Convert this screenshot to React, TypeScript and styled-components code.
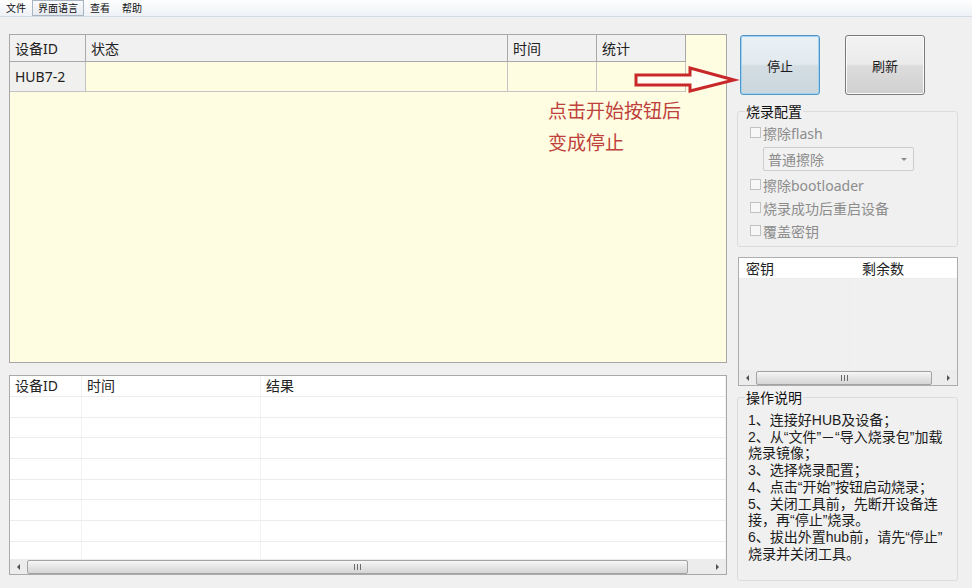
import React from "react";
import styled, { createGlobalStyle } from "styled-components";

const GlobalStyle = createGlobalStyle`
  html, body { margin: 0; padding: 0; background: #f0f0f0; }
  body { font-family: "Noto Sans", "Noto Sans CJK SC", sans-serif; color: #222; }
  * { box-sizing: border-box; }
`;

const Root = styled.div`
  position: relative;
  width: 972px;
  height: 588px;
  overflow: hidden;
  background: #f0f0f0;
  display: flex;
  flex-direction: column;
`;

const MenuBar = styled.div`
  height: 17px;
  display: flex;
  align-items: center;
  background: linear-gradient(#fefefe, #eef1f6);
  border-bottom: 1px solid #d3dbe6;
`;

const MenuItem = styled.div<{ $active?: boolean }>`
  font-size: 10px;
  line-height: 14px;
  height: 16px;
  padding: 0 5px;
  border: 1px solid ${(p) => (p.$active ? "#a9b4c2" : "transparent")};
  background: ${(p) => (p.$active ? "linear-gradient(#fafbfd,#e6eaf0)" : "transparent")};
  color: #111;
  display: flex;
  align-items: center;
`;

const Body = styled.div`
  display: flex;
  gap: 10px;
  padding: 17px 0 0 9px;
`;

const LeftCol = styled.div`
  width: 718px;
  display: flex;
  flex-direction: column;
  gap: 12px;
`;

const DeviceTable = styled.div`
  height: 329px;
  border: 1px solid #a7a7a7;
  background: #fefde2;
  display: grid;
  grid-template-columns: 76px 422px 89px 89px 1fr;
  grid-template-rows: 27px 30px;
  align-content: start;
`;

const HeadCell = styled.div`
  background: #f1f1f1;
  border-right: 1px solid #a9a9a9;
  border-bottom: 1px solid #a9a9a9;
  font-size: 14px;
  padding-left: 5px;
  display: flex;
  align-items: center;
  color: #222;
`;

const RowCell = styled.div<{ $gray?: boolean }>`
  background: ${(p) => (p.$gray ? "#f0f0ee" : "transparent")};
  border-right: 1px solid #c4c4c4;
  border-bottom: 1px solid #c4c4c4;
  font-size: 14px;
  padding-left: 5px;
  display: flex;
  align-items: center;
  color: #222;
`;

const Blank = styled.div``;

const LogTable = styled.div`
  height: 200px;
  border: 1px solid #a9a9a9;
  background: #fff;
  display: flex;
  flex-direction: column;
`;

const LogHead = styled.div`
  display: grid;
  grid-template-columns: 72px 179px 1fr;
  height: 21px;
  flex: none;
  border-bottom: 1px solid #ececec;
`;

const LogHeadCell = styled.div`
  font-size: 14px;
  padding-left: 5px;
  line-height: 20px;
  border-right: 1px solid #f1f1f1;
  color: #222;
`;

const LogBody = styled.div`
  flex: 1;
  overflow: hidden;
`;

const LogRow = styled.div`
  display: grid;
  grid-template-columns: 72px 179px 1fr;
  height: 20.7px;
  border-bottom: 1px solid #ececec;
`;

const LogCell = styled.div`
  border-right: 1px solid #f2f2f2;
`;

const Scroll = styled.div`
  height: 15px;
  flex: none;
  display: flex;
  align-items: center;
  background: #ececec;
`;

const ArrowBtn = styled.div<{ $dir: "l" | "r" }>`
  width: 17px;
  height: 15px;
  flex: none;
  display: flex;
  align-items: center;
  justify-content: center;
  &::before {
    content: "";
    width: 0;
    height: 0;
    border-top: 3px solid transparent;
    border-bottom: 3px solid transparent;
    ${(p) => (p.$dir === "l" ? "border-right: 3px solid #505050;" : "border-left: 3px solid #505050;")}
  }
`;

const Thumb = styled.div<{ $w: number }>`
  width: ${(p) => p.$w}px;
  height: 14px;
  flex: none;
  border: 1px solid #a3a3a3;
  border-radius: 2px;
  background: linear-gradient(#f6f6f6, #e4e4e4 50%, #d6d6d6);
  display: flex;
  align-items: center;
  justify-content: center;
`;

const Spacer = styled.div`
  flex: 1;
`;

const Grip = () => (
  <svg width="7" height="6" viewBox="0 0 7 6">
    <path d="M0.5 0v6M3.5 0v6M6.5 0v6" stroke="#6a6a6a" strokeWidth="1" />
  </svg>
);

const ScrollBar = ({ thumb }: { thumb: number }) => (
  <Scroll>
    <ArrowBtn $dir="l" />
    <Thumb $w={thumb}>
      <Grip />
    </Thumb>
    <Spacer />
    <ArrowBtn $dir="r" />
  </Scroll>
);

const RightCol = styled.div`
  width: 221px;
  display: flex;
  flex-direction: column;
`;

const ButtonRow = styled.div`
  display: flex;
  gap: 25px;
  padding-left: 3px;
  margin-top: 1px;
`;

const Button = styled.div<{ $focus?: boolean }>`
  width: 80px;
  height: 60px;
  border-radius: 3px;
  border: 1px solid ${(p) => (p.$focus ? "#4f98c8" : "#7a7a7a")};
  box-shadow: ${(p) => (p.$focus ? "inset 0 0 0 1px #9fd0ee" : "inset 0 0 0 1px #fbfbfb")};
  background: ${(p) =>
    p.$focus
      ? "linear-gradient(#eaf1f5, #e2eaef 48%, #d3dde3 52%, #cbd6dd)"
      : "linear-gradient(#f2f2f2, #ebebeb 48%, #dcdcdc 52%, #d0d0d0)"};
  display: flex;
  align-items: center;
  justify-content: center;
  font-size: 13px;
  color: #1a1a1a;
`;

const Group = styled.fieldset<{ $mt: number; $h?: number }>`
  margin: ${(p) => p.$mt}px 0 0 0;
  padding: 0 0 4px 0;
  border: 1px solid #dcdcdc;
  border-radius: 3px;
  min-width: 0;
  ${(p) => (p.$h ? `height: ${p.$h}px;` : "")}
`;

const Legend = styled.legend`
  margin-left: 7px;
  padding: 0 1px;
  font-size: 14px;
  line-height: 17px;
  color: #111;
`;

const CheckRow = styled.div<{ $mt: number }>`
  height: 23px;
  margin-top: ${(p) => p.$mt}px;
  display: flex;
  align-items: center;
  padding-left: 12px;
  gap: 2px;
  font-size: 14px;
  color: #8c8c8c;
`;

const Box = styled.span`
  width: 11px;
  height: 11px;
  border: 1px solid #c2c2c2;
  background: #f7f7f7;
  flex: none;
`;

const Combo = styled.div`
  margin: 3px 0 0 25px;
  width: 151px;
  height: 24px;
  border: 1px solid #cdcdcd;
  border-radius: 2px;
  background: #f2f2f2;
  display: flex;
  align-items: center;
  justify-content: space-between;
  padding: 0 6px 0 4px;
  font-size: 14px;
  color: #8c8c8c;
  &::after {
    content: "";
    border-left: 3px solid transparent;
    border-right: 3px solid transparent;
    border-top: 3px solid #8c8c8c;
  }
`;

const KeyList = styled.div`
  margin: 10px 0 0 1px;
  width: 220px;
  height: 129px;
  border: 1px solid #adadad;
  background: #f0f0f0;
  display: flex;
  flex-direction: column;
`;

const KeyHead = styled.div`
  height: 21px;
  flex: none;
  display: grid;
  grid-template-columns: 116px 1fr;
  background: #fff;
  border-bottom: 1px solid #ececec;
`;

const KeyHeadCell = styled.div`
  font-size: 14px;
  line-height: 21px;
  padding-left: 7px;
  color: #222;
`;

const KeyBody = styled.div`
  flex: 1;
  display: grid;
  grid-template-columns: 116px 1fr;
`;

const KeyCol = styled.div`
  border-right: 1px solid #f3f3f3;
`;

const Help = styled.div`
  padding: 6px 0 0 10px;
  font-family: "Liberation Sans", "Noto Sans CJK SC", sans-serif;
  font-size: 14px;
  line-height: 16.7px;
  color: #1c1c1c;
`;

const HelpLine = styled.div`
  white-space: nowrap;
`;

const Overlay = styled.div`
  position: absolute;
  left: 0;
  top: 0;
  width: 0;
  height: 0;
`;

const ArrowSvg = styled.svg`
  position: absolute;
  left: 630px;
  top: 62px;
`;

const Note = styled.div`
  position: absolute;
  left: 548px;
  top: 95px;
  font-size: 19px;
  line-height: 32px;
  color: #c0413b;
  white-space: nowrap;
`;

const helpLines = [
  "1、连接好HUB及设备；",
  "2、从“文件”－“导入烧录包”加载",
  "烧录镜像；",
  "3、选择烧录配置；",
  "4、点击“开始”按钮启动烧录；",
  "5、关闭工具前，先断开设备连",
  "接，再“停止”烧录。",
  "6、拔出外置hub前，请先“停止”",
  "烧录并关闭工具。",
];

export default function App() {
  return (
    <Root>
      <GlobalStyle />
      <MenuBar>
        <MenuItem>文件</MenuItem>
        <MenuItem $active>界面语言</MenuItem>
        <MenuItem>查看</MenuItem>
        <MenuItem>帮助</MenuItem>
      </MenuBar>
      <Body>
        <LeftCol>
          <DeviceTable>
            <HeadCell>设备ID</HeadCell>
            <HeadCell>状态</HeadCell>
            <HeadCell>时间</HeadCell>
            <HeadCell>统计</HeadCell>
            <Blank />
            <RowCell $gray>HUB7-2</RowCell>
            <RowCell />
            <RowCell />
            <RowCell />
            <Blank />
          </DeviceTable>
          <LogTable>
            <LogHead>
              <LogHeadCell>设备ID</LogHeadCell>
              <LogHeadCell>时间</LogHeadCell>
              <LogHeadCell>结果</LogHeadCell>
            </LogHead>
            <LogBody>
              {Array.from({ length: 8 }).map((_, i) => (
                <LogRow key={i}>
                  <LogCell />
                  <LogCell />
                  <LogCell />
                </LogRow>
              ))}
            </LogBody>
            <ScrollBar thumb={661} />
          </LogTable>
        </LeftCol>
        <RightCol>
          <ButtonRow>
            <Button $focus>停止</Button>
            <Button>刷新</Button>
          </ButtonRow>
          <Group $mt={8}>
            <Legend>烧录配置</Legend>
            <CheckRow $mt={1}>
              <Box />
              擦除flash
            </CheckRow>
            <Combo>普通擦除</Combo>
            <CheckRow $mt={2}>
              <Box />
              擦除bootloader
            </CheckRow>
            <CheckRow $mt={0}>
              <Box />
              烧录成功后重启设备
            </CheckRow>
            <CheckRow $mt={0}>
              <Box />
              覆盖密钥
            </CheckRow>
          </Group>
          <KeyList>
            <KeyHead>
              <KeyHeadCell>密钥</KeyHeadCell>
              <KeyHeadCell>剩余数</KeyHeadCell>
            </KeyHead>
            <KeyBody>
              <KeyCol />
              <div />
            </KeyBody>
            <ScrollBar thumb={176} />
          </KeyList>
          <Group $mt={3} $h={192}>
            <Legend>操作说明</Legend>
            <Help>
              {helpLines.map((l) => (
                <HelpLine key={l}>{l}</HelpLine>
              ))}
            </Help>
          </Group>
        </RightCol>
      </Body>
      <Overlay>
        <ArrowSvg width="110" height="36" viewBox="0 0 110 36">
          <polygon
            points="6,13 60,13 60,6 104,18 60,29 60,23 6,23"
            fill="#fffef2"
            stroke="#c9282b"
            strokeWidth="3"
            strokeLinejoin="miter"
          />
        </ArrowSvg>
        <Note>
          点击开始按钮后
          <br />
          变成停止
        </Note>
      </Overlay>
    </Root>
  );
}
